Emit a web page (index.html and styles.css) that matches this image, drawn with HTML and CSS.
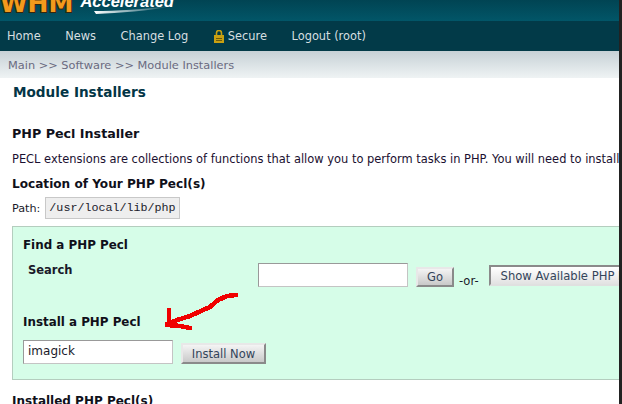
FILE: index.html
```html
<!DOCTYPE html>
<html lang="en">
<head>
<meta charset="utf-8">
<title>Module Installers</title>
<link rel="stylesheet" href="styles.css">
</head>
<body>
<div class="page">
  <header class="brand">
    <span class="whm">WHM</span>
    <span class="accel">Accelerated</span>
    <svg class="swoosh" width="80" height="8" viewBox="0 0 80 8"><defs><linearGradient id="sw"><stop offset="0" stop-color="#fff"/><stop offset="1" stop-color="#fff" stop-opacity="0"/></linearGradient></defs><path d="M0 5C22 5 52 3 78 0C55 5 25 7 2 8Z" fill="url(#sw)"/></svg>
  </header>
  <nav class="nav">
    <a>Home</a>
    <a>News</a>
    <a>Change Log</a>
    <a class="secure">
      <svg class="lock" width="10" height="13" viewBox="0 0 10 13"><path d="M2.5 5V3a2.5 2.5 0 0 1 5 0V5" fill="none" stroke="#c9a012" stroke-width="1.6"/><rect y="5" width="10" height="8" fill="#c9a012"/><rect x="2" y="8" width="6" height="1" fill="#6f5a0a"/><rect x="2" y="10" width="6" height="1" fill="#6f5a0a"/></svg>
      Secure</a>
    <a>Logout (root)</a>
  </nav>
  <div class="crumbs">Main &gt;&gt; Software &gt;&gt; Module Installers</div>
  <main class="content">
    <h1>Module Installers</h1>
    <h2 class="first">PHP Pecl Installer</h2>
    <p class="intro">PECL extensions are collections of functions that allow you to perform tasks in PHP. You will need to install the PECL extension before use.</p>
    <h2 class="loc">Location of Your PHP Pecl(s)</h2>
    <div class="path">Path: <code>/usr/local/lib/php</code></div>
    <section class="panel">
      <h3>Find a PHP Pecl</h3>
      <div class="search-row">
        <strong class="search-label">Search</strong>
        <input class="field search-field" type="text">
        <button class="btn go">Go</button>
        <span class="or">-or-</span>
        <button class="btn show">Show Available PHP Pecls</button>
      </div>
      <h3 class="install-title">Install a PHP Pecl</h3>
      <div class="install-row">
        <input class="field" type="text" value="imagick">
        <button class="btn install">Install Now</button>
      </div>
      <svg class="arrow" width="90" height="50" viewBox="0 0 90 50" shape-rendering="crispEdges"><path d="M76 10L67 11L58 15L50 22L43 25L30 31L17 35L10 38L7 39M9 25V38M7 40L20 41L30 43" fill="none" stroke="#f00000" stroke-width="4.6" stroke-linecap="round" stroke-linejoin="round"/></svg>
    </section>
    <h2 class="installed">Installed PHP Pecl(s)</h2>
  </main>
</div>
</body>
</html>
```
FILE: styles.css
```css
html, body { margin: 0; padding: 0; height: 100%; overflow: hidden; background: #222; }
.page { width: 619px; height: 404px; overflow: hidden; background: #fff; font-family: "DejaVu Sans", sans-serif; font-size: 11.5px; color: #1a1a2a; }
.brand { height: 21px; background: linear-gradient(#014453, #025668); position: relative; overflow: hidden; display: flex; align-items: flex-start; }
.whm { font: bold 25px/25px "DejaVu Sans", sans-serif; color: #f29a1d; margin: -9px 0 0 0; -webkit-text-stroke: 2px #35260c; paint-order: stroke fill; }
.accel { font: italic bold 16.5px/16.5px "Liberation Sans", sans-serif; color: #fff; margin: -7px 0 0 7px; }
.swoosh { position: absolute; left: 94px; top: 6px; }
.nav { height: 30px; background: #023a48; display: flex; align-items: center; padding-left: 7px; gap: 24.6px; color: #d6dfe0; font-size: 11.4px; }
.secure { display: flex; align-items: center; gap: 4px; margin-left: 1px; }
.crumbs { height: 27px; box-sizing: border-box; padding: 8px 0 0 8px; background: linear-gradient(#c6d1d6, #eff3f4); color: #6a6a80; font-size: 11.35px; line-height: 13px; }
.content { padding: 0 0 0 12px; white-space: nowrap; }
h1 { font-size: 13.6px; line-height: 16px; margin: 6px 0 0 1px; color: #033546; }
h2 { font-size: 12.7px; line-height: 15px; margin: 0; color: #10101a; }
h2.first { margin-top: 26px; }
.intro { margin: 12px 0 0; font-size: 11.45px; line-height: 13px; color: #1a1030; }
h2.loc { margin-top: 11px; font-size: 12.1px; }
.path { margin-top: 5px; display: flex; align-items: center; gap: 5px; font-size: 11.2px; }
code { display: block; background: #eee; border: 1px solid #c8c8c8; padding: 0 3px; height: 22px; box-sizing: border-box; font: 11.7px/20px "Liberation Mono", monospace; }
.panel { position: relative; margin-top: 7px; width: 640px; height: 154px; box-sizing: border-box; background: #d6fde8; border: 1px solid #b4cdbe; padding: 11px 0 0 10px; }
h3 { font-size: 11.9px; line-height: 15px; margin: 0; color: #10101a; }
.search-row { display: flex; align-items: flex-start; margin-top: 10px; }
.search-row > * { flex: none; }
.search-label { width: 230px; margin-left: 5px; font-size: 11.5px; line-height: 14px; }
.field { width: 150px; height: 24px; box-sizing: border-box; border: 1px solid #c4c4c4; border-top-color: #999; border-left-color: #999; background: #fff; padding: 0 4px 2px; font: 12px "DejaVu Sans", sans-serif; color: #1a1a2a; outline: none; }
.btn { box-sizing: border-box; font: 11.5px "DejaVu Sans", sans-serif; color: #33445a; background: linear-gradient(#f4f4f4, #c9c9c9); border: 2px solid; border-color: #e8e8e8 #8a8a8a #8a8a8a #e8e8e8; padding: 0; height: 21px; }
.go { width: 38px; height: 20px; margin: 4px 0 0 8px; }
.or { margin: 11px 0 0 5px; font-size: 11.5px; line-height: 14px; }
.show { width: 170px; height: 21px; margin: 2px 0 0 10px; text-align: left; padding-left: 10px; font-size: 11.6px; background: linear-gradient(#fff, #e2e2e2); border-color: #8a8a8a #e0e0e0 #e0e0e0 #8a8a8a; }
.install-title { margin-top: 27px; }
.install-row { display: flex; align-items: flex-start; margin-top: 10px; }
.install { width: 85px; margin: 3px 0 0 8px; }
.arrow { position: absolute; left: 147px; top: 58px; }
h2.installed { margin-top: 14px; font-size: 12px; }
```
